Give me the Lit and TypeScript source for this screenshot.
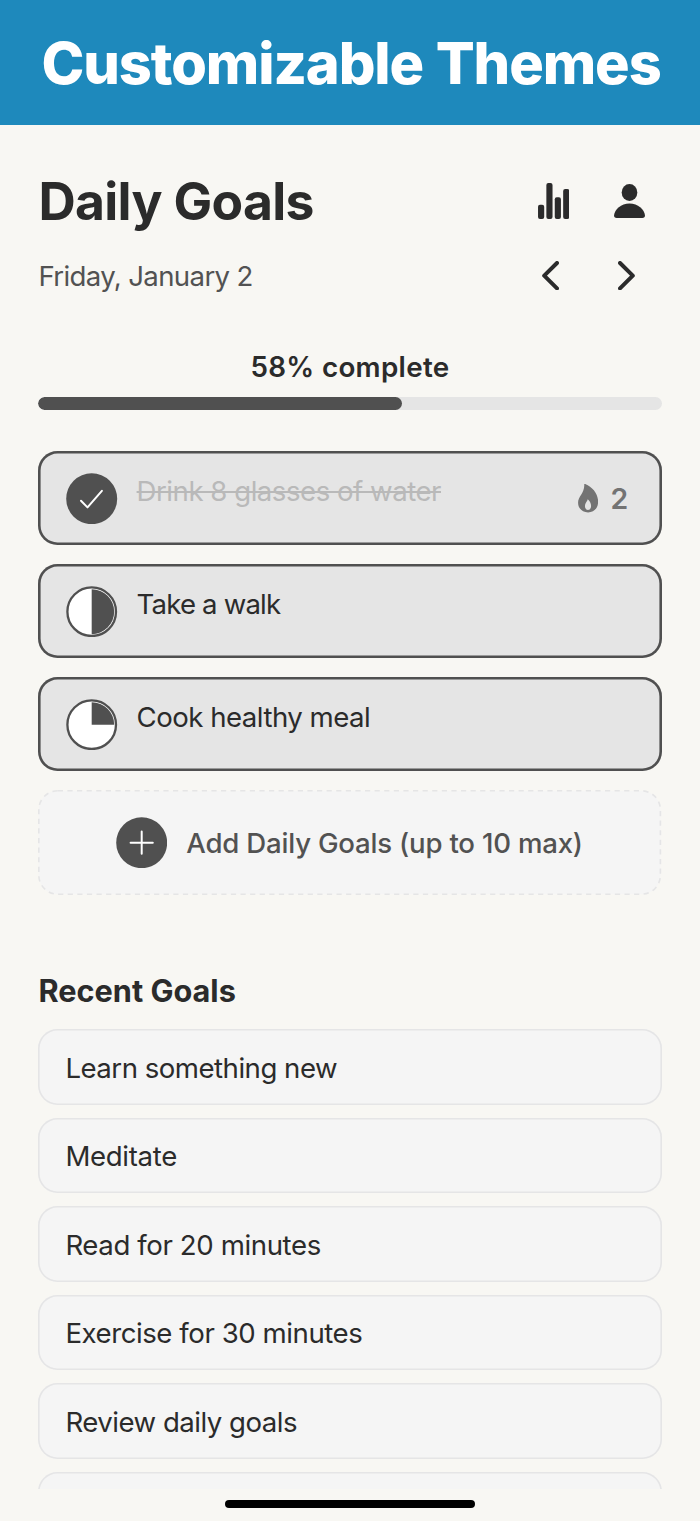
import { LitElement, html, css, svg, nothing } from "lit";
import { customElement, property } from "lit/decorators.js";
import { styleMap } from "lit/directives/style-map.js";

interface Goal {
  title: string;
  progress: number;
  streak?: number;
  tracking: number;
}

interface Recent {
  title: string;
  tracking: number;
}

const GOALS: Goal[] = [
  { title: "Drink 8 glasses of water", progress: 1, streak: 2, tracking: -0.48 },
  { title: "Take a walk", progress: 0.5, tracking: -0.83 },
  { title: "Cook healthy meal", progress: 0.25, tracking: -0.51 },
];

const RECENTS: Recent[] = [
  { title: "Learn something new", tracking: -0.5 },
  { title: "Meditate", tracking: -0.32 },
  { title: "Read for 20 minutes", tracking: -0.39 },
  { title: "Exercise for 30 minutes", tracking: -0.44 },
  { title: "Review daily goals", tracking: -0.5 },
  { title: "", tracking: 0 },
];

const spacing = (px: number) => styleMap({ letterSpacing: `${px}px` });

@customElement("goal-dial")
class GoalDial extends LitElement {
  @property({ type: Number }) progress = 0;

  static styles = css`
    :host {
      display: block;
      flex: none;
      width: 51.4px;
      height: 51.4px;
    }
    svg {
      display: block;
      width: 100%;
      height: 100%;
    }
  `;

  private wedge() {
    const r = 22.5;
    const c = 25.7;
    const a = this.progress * 2 * Math.PI;
    const x = c + r * Math.sin(a);
    const y = c - r * Math.cos(a);
    return svg`<path d="M${c} ${c}V${c - r}A${r} ${r} 0 ${this.progress > 0.5 ? 1 : 0} 1 ${x} ${y}Z" fill="#505050"/>`;
  }

  render() {
    return html`<svg viewBox="0 0 51.4 51.4">
      ${this.progress >= 1
        ? svg`<circle cx="25.7" cy="25.7" r="25.5" fill="#505050"/>
            <path d="M15 27.7L21.5 34.4L35.9 17.8" fill="none" stroke="#fff" stroke-width="2" stroke-linecap="round" stroke-linejoin="round"/>`
        : svg`<circle cx="25.7" cy="25.7" r="24.3" fill="#fff" stroke="#505050" stroke-width="2.3"/>${this.wedge()}`}
    </svg>`;
  }
}

@customElement("app-root")
class AppRoot extends LitElement {
  static styles = css`
    :host {
      display: flex;
      flex-direction: column;
      height: 1521px;
      overflow: hidden;
      background: #f8f7f3;
      color: #2b2b2b;
      font-family: Inter, "Liberation Sans", sans-serif;
      font-size: 27.6px;
      line-height: 36px;
      white-space: nowrap;
    }
    * {
      box-sizing: border-box;
    }
    svg {
      display: block;
      flex: none;
    }
    .banner {
      flex: none;
      height: 125.4px;
      padding-left: 41.5px;
      display: flex;
      align-items: center;
      background: #1e89bc;
      color: #fff;
      font-size: 57.7px;
      font-weight: 800;
      letter-spacing: -1.1px;
      word-spacing: 1px;
    }
    .content {
      flex: none;
      height: 1363.4px;
      padding: 45.8px 38.4px 0;
      overflow: hidden;
    }
    .row {
      display: flex;
      align-items: center;
      justify-content: space-between;
    }
    .head {
      height: 60px;
      padding-right: 16.2px;
    }
    .title {
      margin: 0;
      font-size: 51.6px;
      font-weight: 700;
      line-height: 60px;
      letter-spacing: -0.66px;
    }
    .icons {
      display: flex;
      align-items: center;
      gap: 45.3px;
    }
    .dates {
      height: 40px;
      margin-top: 24.6px;
      padding-right: 26.4px;
      color: #525252;
      letter-spacing: -0.64px;
    }
    .arrows {
      display: flex;
      gap: 59px;
    }
    .percent {
      height: 36px;
      margin-top: 53.4px;
      text-align: center;
      font-size: 27.8px;
      font-weight: 600;
      letter-spacing: 0.31px;
    }
    .track {
      height: 13px;
      margin-top: 11.4px;
      border-radius: 6.5px;
      background: #e5e5e5;
      overflow: hidden;
    }
    .fill {
      height: 100%;
      border-radius: 6.5px;
      background: #505050;
    }
    .goals {
      display: flex;
      flex-direction: column;
      gap: 19.2px;
      margin-top: 41.7px;
    }
    .goal {
      display: flex;
      align-items: center;
      height: 93.7px;
      padding: 1px 33.5px 0 28px;
      border-radius: 19.5px;
      background: #e5e5e5;
      box-shadow: inset 0 0 0 2.6px #505050;
    }
    .name {
      flex: 1;
      height: 51.4px;
      padding-top: 0.5px;
      margin-left: 18.8px;
    }
    .done {
      color: #b9b9b9;
      text-decoration: line-through;
      text-decoration-thickness: 2px;
    }
    .streak {
      display: flex;
      align-items: center;
      gap: 12.6px;
      color: #737373;
      font-size: 28.4px;
      font-weight: 600;
    }
    .add {
      display: grid;
      height: 105px;
    }
    .add > * {
      grid-area: 1 / 1;
    }
    .add-body {
      display: flex;
      align-items: center;
      justify-content: center;
      gap: 19.2px;
      padding-right: 1.4px;
      color: #525252;
      font-weight: 500;
      letter-spacing: -0.21px;
    }
    .add-label {
      padding-top: 2px;
    }
    .subhead {
      margin: 76.1px 0 18.2px;
      font-size: 30.7px;
      font-weight: 700;
      line-height: 40px;
    }
    .recents {
      display: flex;
      flex-direction: column;
      gap: 12.95px;
    }
    .recent {
      flex: none;
      display: flex;
      align-items: center;
      height: 75.6px;
      padding: 1.2px 27px 0;
      border-radius: 19.5px;
      background: #f5f5f5;
      box-shadow: inset 0 0 0 1.6px #e5e5e6;
    }
    .footer {
      flex: 1;
      display: flex;
      justify-content: center;
      padding-top: 11.2px;
    }
    .handle {
      width: 250px;
      height: 8px;
      border-radius: 4px;
      background: #000;
    }
  `;

  private flame() {
    return html`<svg width="20.2" height="28.4" viewBox="0 0 60 85" fill="#737373">
      <path fill-rule="evenodd" d="M18.500 1C18.500 -.2 20 -.2 21.500 .3C44 9 60 31 60 53C60 73 47 85 30 85C13 85 0 73 0 56C0 36 20 28 18.500 1ZM29 45.500C28 51 20.500 57 20.500 66C20.500 73 24 77.500 29.500 77.500C35.500 77.500 39 73 39 66C39 57 34 49 29 45.500Z"/>
    </svg>`;
  }

  private goal(g: Goal) {
    return html`<div class="goal">
      <goal-dial .progress=${g.progress}></goal-dial>
      <div class="name"><span class=${g.progress >= 1 ? "done" : ""} style=${spacing(g.tracking)}>${g.title}</span></div>
      ${g.streak ? html`<div class="streak">${this.flame()}<span>${g.streak}</span></div>` : nothing}
    </div>`;
  }

  render() {
    const percent = (GOALS.reduce((sum, g) => sum + g.progress, 0) / GOALS.length) * 100;
    return html`
      <header class="banner">Customizable Themes</header>
      <main class="content">
        <div class="row head">
          <h1 class="title">Daily Goals</h1>
          <div class="icons">
            <svg width="31.400" height="36" viewBox="0 0 94 108" fill="#2b2b2b">
              <rect x="0" y="65" width="18.500" height="43" rx="6" />
              <rect x="25" y="0" width="18.500" height="108" rx="6" />
              <rect x="50.200" y="43" width="18.500" height="65" rx="6" />
              <rect x="75.400" y="18" width="18.500" height="90" rx="6" />
            </svg>
            <svg width="31" height="34" viewBox="0 0 93 102" fill="#2b2b2b">
              <ellipse cx="46.500" cy="25.500" rx="23.500" ry="25.500" />
              <path d="M8 102C2.500 102 0 99 0 94.500C2 76 21 58.500 46.500 58.500C72 58.500 91 76 93 94.500C93 99 90.500 102 85 102Z" />
            </svg>
          </div>
        </div>
        <div class="row dates">
          <span>Friday, January 2</span>
          <div class="arrows">
            <svg width="17" height="29.4" viewBox="0 0 17 29.400" fill="none" stroke="#2b2b2b" stroke-width="4" stroke-linecap="round" stroke-linejoin="round">
              <path d="M15 2L2.200 14.700L15 27.400" />
            </svg>
            <svg width="17" height="29.4" viewBox="0 0 17 29.400" fill="none" stroke="#2b2b2b" stroke-width="4" stroke-linecap="round" stroke-linejoin="round">
              <path d="M2 2L14.800 14.700L2 27.400" />
            </svg>
          </div>
        </div>
        <div class="percent">${Math.round(percent)}% complete</div>
        <div class="track"><div class="fill" style=${styleMap({ width: `${percent}%` })}></div></div>
        <section class="goals">
          ${GOALS.map((g) => this.goal(g))}
          <div class="add">
            <svg width="623.2" height="105" viewBox="0 0 623.200 105">
              <rect x=".8" y=".8" width="621.6" height="103.400" rx="19" fill="#f5f5f5" stroke="#e5e5e6" stroke-width="1.600" stroke-dasharray="5.200 4.400" />
            </svg>
            <div class="add-body">
              <svg width="51.4" height="51.4" viewBox="0 0 51.400 51.400">
                <circle cx="25.700" cy="25.700" r="25.500" fill="#505050" />
                <path d="M14.600 25.700H36.800M25.700 14.600V36.800" stroke="#fff" stroke-width="2" stroke-linecap="round" />
              </svg>
              <span class="add-label">Add Daily Goals (up to 10 max)</span>
            </div>
          </div>
        </section>
        <h2 class="subhead">Recent Goals</h2>
        <section class="recents">
          ${RECENTS.map((r) => html`<div class="recent"><span style=${spacing(r.tracking)}>${r.title}</span></div>`)}
        </section>
      </main>
      <footer class="footer"><div class="handle"></div></footer>
    `;
  }
}
